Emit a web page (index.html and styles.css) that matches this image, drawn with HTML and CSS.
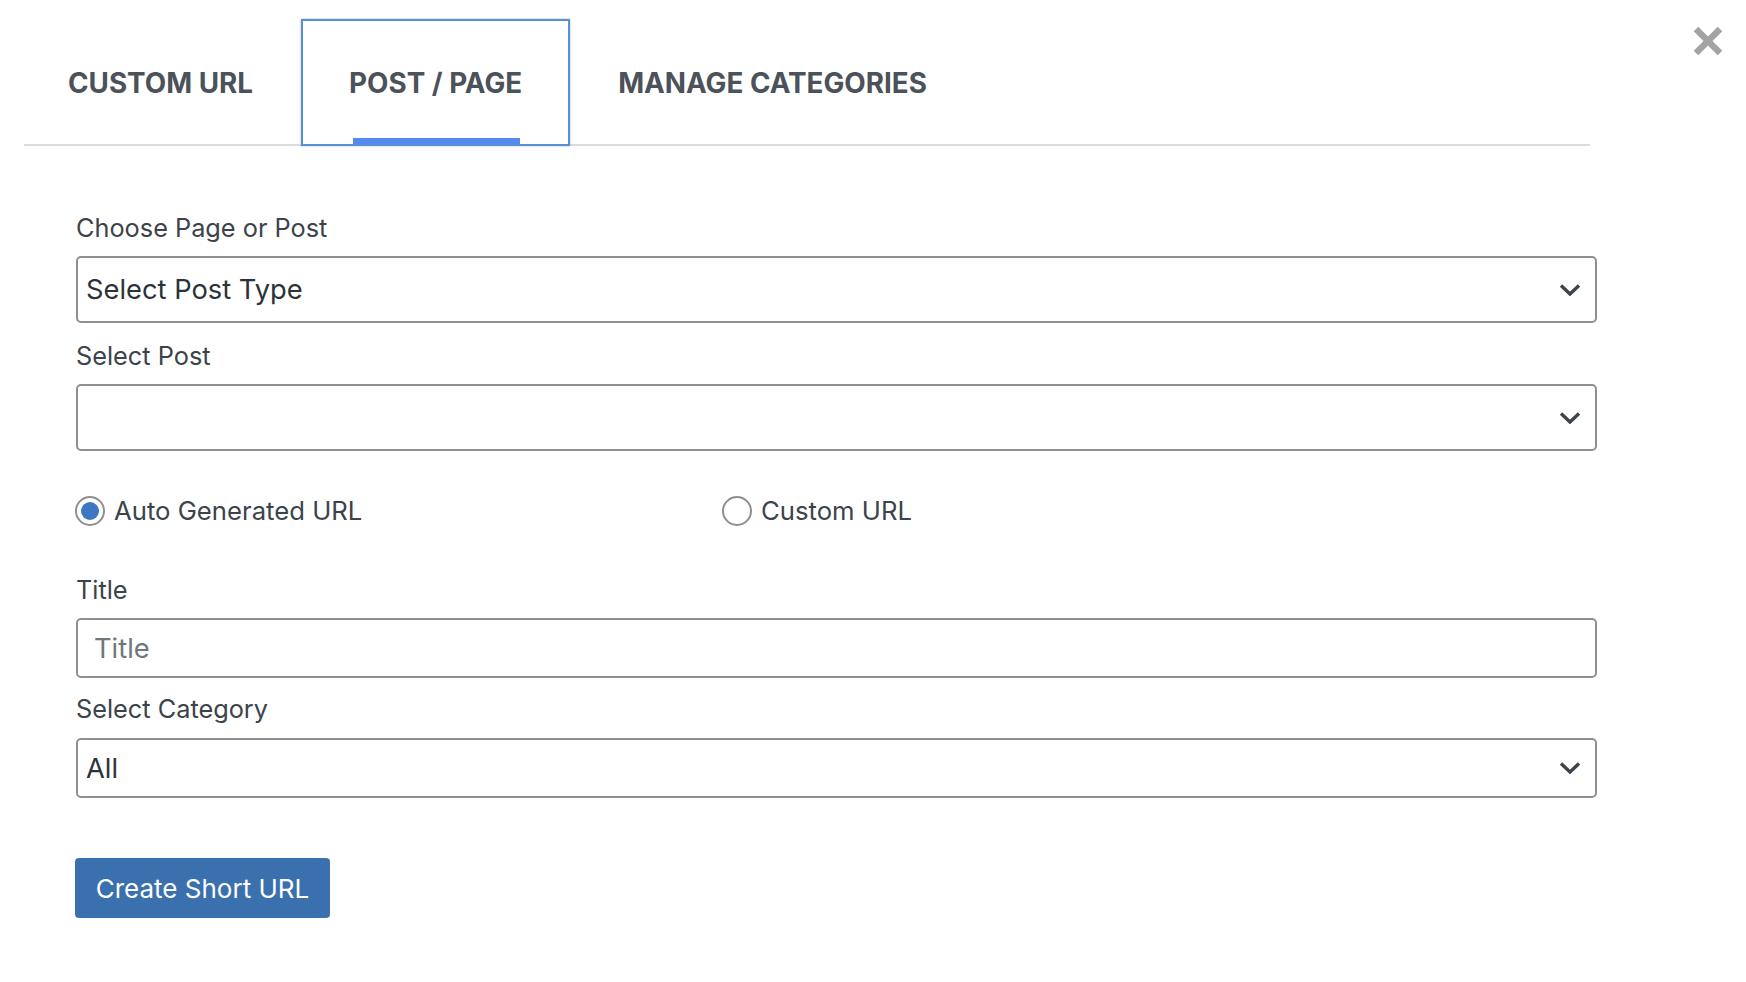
FILE: index.html
```html
<!DOCTYPE html>
<html lang="en">
<head>
<meta charset="utf-8">
<title>Post / Page</title>
<link rel="stylesheet" href="styles.css">
</head>
<body>
<div class="modal">
  <button class="close" aria-label="Close">
    <svg width="30" height="30" viewBox="0 0 30 30"><path d="M3 3 L27 27 M27 3 L3 27" stroke="#a3a3a3" stroke-width="6.5" stroke-linecap="butt"/></svg>
  </button>
  <nav class="tabs">
    <div class="tab">CUSTOM URL</div>
    <div class="tab active">POST / PAGE</div>
    <div class="tab">MANAGE CATEGORIES</div>
  </nav>
  <form class="form">
    <label class="label">Choose Page or Post</label>
    <div class="field select tall">
      <span class="value">Select Post Type</span>
      <svg class="chev" width="22" height="12" viewBox="0 0 22 12"><path d="M2 1.5 L11 10 L20 1.5" fill="none" stroke="#3c434a" stroke-width="3.4"/></svg>
    </div>
    <label class="label">Select Post</label>
    <div class="field select tall">
      <span class="value"></span>
      <svg class="chev" width="22" height="12" viewBox="0 0 22 12"><path d="M2 1.5 L11 10 L20 1.5" fill="none" stroke="#3c434a" stroke-width="3.4"/></svg>
    </div>
    <div class="radios">
      <div class="radio-item"><span class="radio checked"></span><span>Auto Generated URL</span></div>
      <div class="radio-item"><span class="radio"></span><span>Custom URL</span></div>
    </div>
    <label class="label">Title</label>
    <div class="field input"><span class="placeholder">Title</span></div>
    <label class="label label-cat">Select Category</label>
    <div class="field select cat">
      <span class="value">All</span>
      <svg class="chev" width="22" height="12" viewBox="0 0 22 12"><path d="M2 1.5 L11 10 L20 1.5" fill="none" stroke="#3c434a" stroke-width="3.4"/></svg>
    </div>
    <div class="actions">
      <button type="button" class="btn">Create Short URL</button>
    </div>
  </form>
</div>
</body>
</html>
```
FILE: styles.css
```css
* { box-sizing: border-box; }
html, body {
  margin: 0;
  padding: 0;
  background: #ffffff;
  font-family: Inter, "Noto Sans", "Liberation Sans", sans-serif;
}
.modal {
  position: relative;
  width: 1746px;
  height: 982px;
  padding: 19px 0 0 24px;
}
.close {
  position: absolute;
  top: 26px;
  left: 1693px;
  width: 30px;
  height: 30px;
  padding: 0;
  border: 0;
  background: transparent;
  display: flex;
}
.tabs {
  display: flex;
  width: 1566px;
  border-bottom: 2px solid #dcdcde;
  height: 127px;
}
.tab {
  position: relative;
  height: 127px;
  padding: 0 46px;
  display: flex;
  align-items: center;
  font-size: 27.8px;
  font-weight: 700;
  color: #4b525a;
  border: 2px solid transparent;
  margin-bottom: -2px;
}
.tab:first-child { padding-left: 42px; }
.tab.active {
  border-color: #5b8fd3;
  box-shadow: 0 0 2px rgba(91, 143, 211, 0.6);
}
.tab.active::after {
  content: "";
  position: absolute;
  left: 50px;
  right: 48px;
  bottom: 0;
  height: 6px;
  background: #5589ee;
}
.form {
  width: 1521px;
  margin-left: 52px;
  padding-top: 67px;
  display: flex;
  flex-direction: column;
}
.label {
  display: block;
  font-size: 25.3px;
  line-height: 30px;
  color: #3c434a;
  margin: 18px 0 13px;
}
.label:first-child { margin-top: 0; }
.label.label-cat { margin: 16px 0 14px; }
.field {
  display: flex;
  align-items: center;
  border: 2px solid #8c8f94;
  border-radius: 5px;
  height: 60px;
  padding: 0 14px 0 8px;
  font-size: 27.3px;
  color: #2c3338;
}
.field.tall { height: 67px; }
.field.cat { height: 60px; }
.field .value { flex: 1; }
.chev { flex: none; }
.field.input { padding-left: 16px; }
.placeholder { color: #72777c; }
.radios {
  display: grid;
  grid-template-columns: 647px auto;
  margin: 44px 0 50px;
  height: 30px;
  align-items: center;
}
.radios + .label { margin-top: 0; }
.radio-item {
  display: flex;
  align-items: center;
  gap: 9px;
  font-size: 25.7px;
  color: #3c434a;
  margin-left: -1px;
}
.radio {
  flex: none;
  width: 30px;
  height: 30px;
  border: 2px solid #8c8f94;
  border-radius: 50%;
  display: flex;
  align-items: center;
  justify-content: center;
}
.radio.checked::before {
  content: "";
  width: 18px;
  height: 18px;
  border-radius: 50%;
  background: #3d78c4;
}
.actions {
  margin-top: 60px;
}
.btn {
  margin-left: -1px;
  width: 255px;
  height: 60px;
  border: 0;
  border-radius: 4px;
  background: #3a70ae;
  color: #ffffff;
  font-family: Inter, "Noto Sans", "Liberation Sans", sans-serif;
  font-size: 26px;
  padding: 0;
}
```
